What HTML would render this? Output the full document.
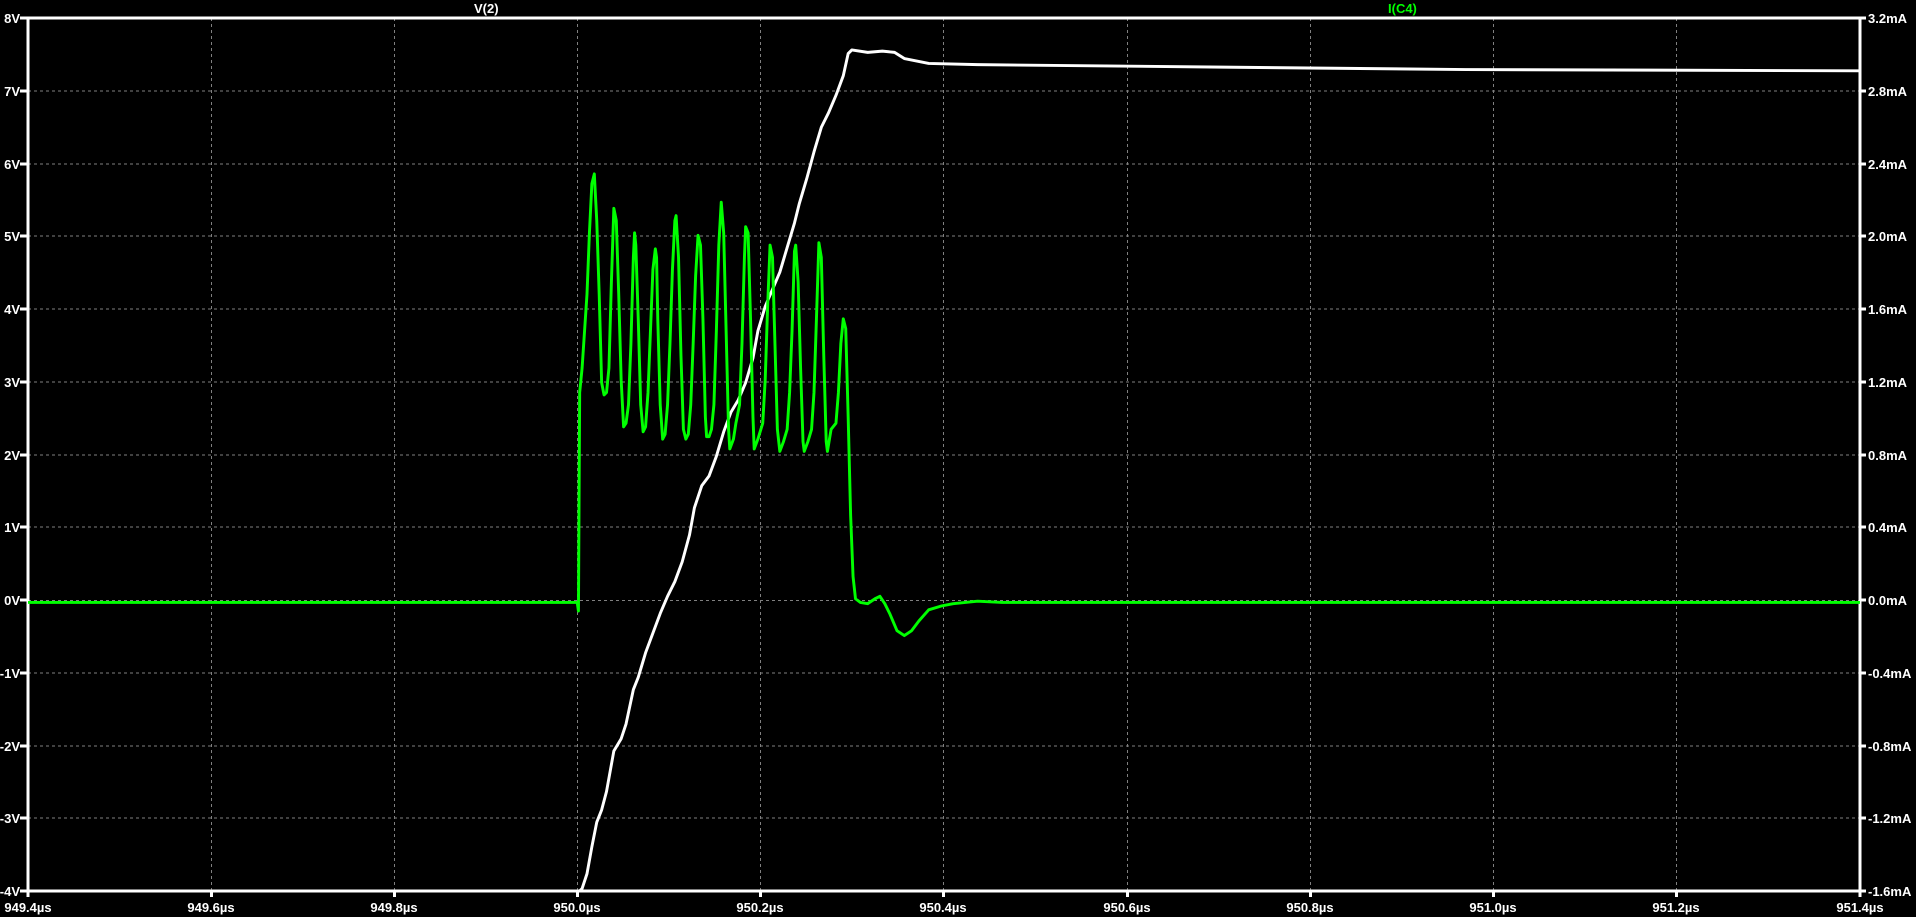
<!DOCTYPE html>
<html><head><meta charset="utf-8"><style>
html,body{margin:0;padding:0;background:#000;width:1916px;height:917px;overflow:hidden}
svg{display:block}
text{font-family:"Liberation Sans",sans-serif;font-weight:bold;font-size:13px;fill:#fff}
</style></head><body>
<svg width="1916" height="917" viewBox="0 0 1916 917" xmlns="http://www.w3.org/2000/svg">
<g stroke="#808080" stroke-width="1" stroke-dasharray="3,3" fill="none">
<path d="M28 91H1860M28 164H1860M28 236H1860M28 309H1860M28 382H1860M28 455H1860M28 527H1860M28 600.5H1860M28 673H1860M28 746H1860M28 818H1860"/>
<path d="M211.5 18V891M394.5 18V891M577.5 18V891M760.5 18V891M943.5 18V891M1127.5 18V891M1310.5 18V891M1493.5 18V891M1676.5 18V891"/>
</g>
<g stroke="#fff" stroke-width="3" fill="none">
<path d="M28 18V891H1860V18H28"/>
<path d="M20 18H28M20 91H28M20 164H28M20 236H28M20 309H28M20 382H28M20 455H28M20 527H28M20 600H28M20 673H28M20 746H28M20 818H28M20 891H28"/>
<path d="M1860 18h6M1860 91h6M1860 164h6M1860 236h6M1860 309h6M1860 382h6M1860 455h6M1860 527h6M1860 600h6M1860 673h6M1860 746h6M1860 818h6M1860 891h6"/>
<path d="M211.5 891v6M394.5 891v6M577.5 891v6M760.5 891v6M943.5 891v6M1127.5 891v6M1310.5 891v6M1493.5 891v6M1676.5 891v6M28 891v6M1860 891v6"/>
</g>
<g transform="matrix(1.2205,0,0,1.2278,1.149,-0.42)" fill="none" stroke-width="2.4" stroke-linejoin="round">
<path stroke="#fff" d="M22 726H474L476 724L480 712L484 690L488 670L492 660L496 645L502 612L508 602L512 590L518 562L522 552L528 532L534 516L540 500L546 486L552 474L558 458L564 436L568 414L574 396L580 388L586 372L592 352L598 336L604 326L610 312L616 292L620 270L626 250L632 236L638 222L644 202L650 182L654 166L660 146L666 124L672 104L678 92L684 78L690 62L694 44L697 41L710 43L722 42L732 43L740 48L760 52L800 53L1000 55L1200 57L1523 58"/>
<path stroke="#00ff00" d="M22 491H472L473 498L474 320L476 300L478 270L480 240L482 190L484 150L486 142L488 180L490 240L492 312L494 322L496 320L498 300L500 230L502 170L504 180L506 240L508 310L510 348L512 345L514 330L516 280L518 210L519 190L520 200L522 260L524 330L526 352L528 348L530 320L532 270L534 220L536 203L537 210L538 260L540 330L542 358L544 354L546 330L548 280L550 220L552 180L553 176L555 210L557 290L559 350L561 358L563 354L565 330L567 280L569 225L571 192L573 200L575 260L577 340L578 356L580 356L582 350L584 330L586 270L588 200L590 165L592 190L594 270L596 350L597 366L600 358L602 345L605 330L607 280L609 210L610 185L612 190L614 260L616 340L617 366L620 358L624 345L626 310L628 250L630 200L632 210L634 280L636 350L638 368L641 360L644 350L646 320L648 270L650 205L651 200L653 230L655 300L657 360L658 368L661 360L664 350L666 320L668 260L670 198L672 210L674 290L676 360L677 368L680 350L684 345L686 320L688 280L690 260L692 268L694 340L696 420L698 470L700 488L704 491L710 492L716 488L720 486L724 492L728 500L734 514L740 518L746 514L752 506L760 497L770 494L780 492L790 491L800 490L820 491L1523 491"/>
</g>
<text x="474" y="13">V(2)</text>
<text x="1388" y="13" style="fill:#00ff00">I(C4)</text>
<g text-anchor="end">
<text x="20" y="23">8V</text><text x="20" y="96">7V</text><text x="20" y="169">6V</text><text x="20" y="241">5V</text><text x="20" y="314">4V</text><text x="20" y="387">3V</text><text x="20" y="460">2V</text><text x="20" y="532">1V</text><text x="20" y="605">0V</text><text x="20" y="678">-1V</text><text x="20" y="751">-2V</text><text x="20" y="823">-3V</text><text x="20" y="896">-4V</text>
</g>
<g>
<text x="1868" y="23">3.2mA</text><text x="1868" y="96">2.8mA</text><text x="1868" y="169">2.4mA</text><text x="1868" y="241">2.0mA</text><text x="1868" y="314">1.6mA</text><text x="1868" y="387">1.2mA</text><text x="1868" y="460">0.8mA</text><text x="1868" y="532">0.4mA</text><text x="1868" y="605">0.0mA</text><text x="1868" y="678">-0.4mA</text><text x="1868" y="751">-0.8mA</text><text x="1868" y="823">-1.2mA</text><text x="1868" y="896">-1.6mA</text>
</g>
<g text-anchor="middle">
<text x="28" y="912">949.4µs</text><text x="211" y="912">949.6µs</text><text x="394" y="912">949.8µs</text><text x="577" y="912">950.0µs</text><text x="760" y="912">950.2µs</text><text x="943" y="912">950.4µs</text><text x="1127" y="912">950.6µs</text><text x="1310" y="912">950.8µs</text><text x="1493" y="912">951.0µs</text><text x="1676" y="912">951.2µs</text><text x="1860" y="912">951.4µs</text>
</g>
</svg>
</body></html>
